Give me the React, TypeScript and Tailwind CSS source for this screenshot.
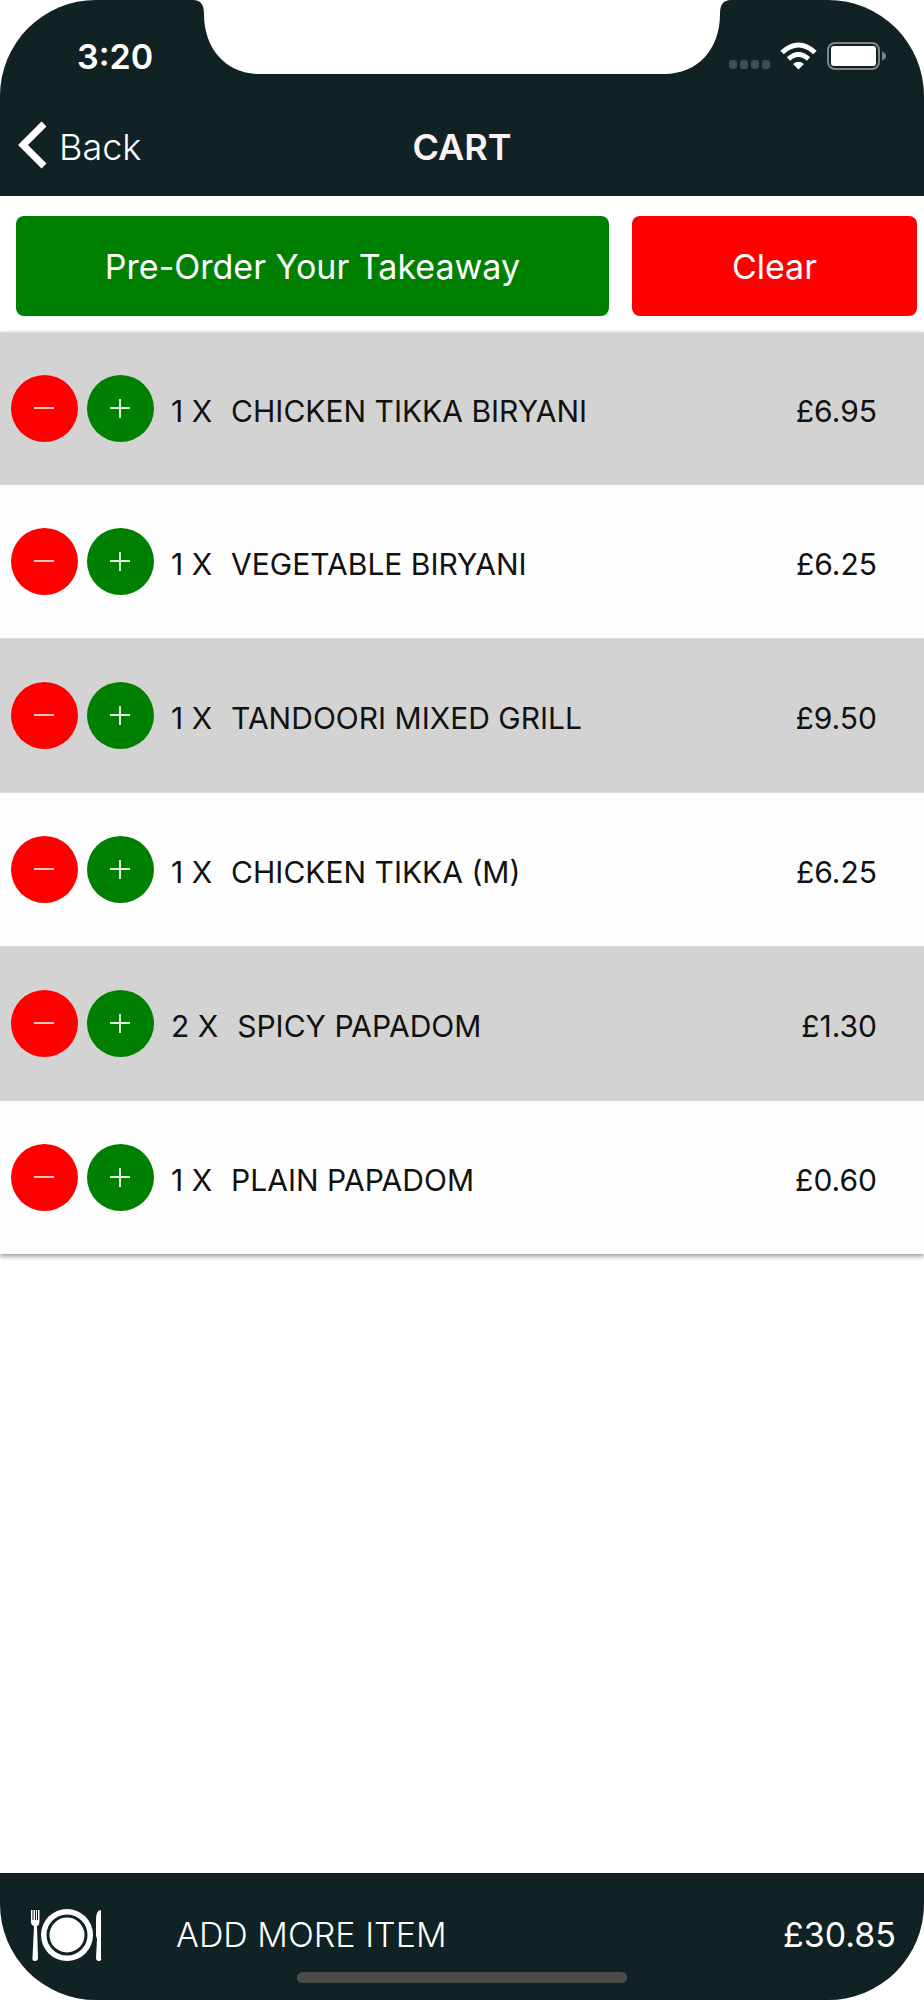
const items = [
  { qty: 1, name: "CHICKEN TIKKA BIRYANI", price: "£6.95" },
  { qty: 1, name: "VEGETABLE BIRYANI", price: "£6.25" },
  { qty: 1, name: "TANDOORI MIXED GRILL", price: "£9.50" },
  { qty: 1, name: "CHICKEN TIKKA (M)", price: "£6.25" },
  { qty: 2, name: "SPICY PAPADOM", price: "£1.30" },
  { qty: 1, name: "PLAIN PAPADOM", price: "£0.60" },
];

const StatusBar = () => {
  return (
    <div className="relative flex justify-between items-center h-28 pl-[77px] pr-[37px]">
      <span className="text-[34px] font-semibold">3:20</span>
      <svg
        className="absolute top-0 left-1/2 -translate-x-1/2"
        width="538"
        height="74"
        viewBox="0 0 538 74"
        fill="#fff"
      >
        <path d="M0 0C8 0 11 5 11 14C11 49 33 74 67 74H471C505 74 527 49 527 14C527 5 530 0 538 0Z" />
      </svg>
      <svg width="158" height="28" viewBox="0 0 158 28">
        <g fill="#414e51">
          <rect x="0" y="18" width="8" height="9" rx="3" />
          <rect x="11" y="18" width="8" height="9" rx="3" />
          <rect x="22" y="18" width="8" height="9" rx="3" />
          <rect x="33" y="18" width="8" height="9" rx="3" />
        </g>
        <g fill="none" stroke="#fff" strokeWidth="5">
          <path d="M53 10.5Q69.5 -4.5 86 10.5" />
          <path d="M59.5 17Q69.5 8 79.5 17" />
        </g>
        <path d="M64 22Q69.5 17.5 75 22L69.5 27.5Z" fill="#fff" />
        <rect x="99" y="1" width="51" height="26" rx="7" fill="none" stroke="#7c8587" strokeWidth="2" />
        <rect x="102" y="4" width="45" height="20" rx="3" fill="#fff" />
        <path d="M153 9.5Q157 11 157 14T153 18.5Z" fill="#7c8587" />
      </svg>
    </div>
  );
};

const Header = () => {
  return (
    <header className="bg-[#112225] text-white">
      <StatusBar />
      <div className="grid grid-cols-[1fr_auto_1fr] items-center h-[84px] pb-3.5">
        <button className="flex items-center gap-3 pl-[18px] text-[36px] font-light">
          <svg
            className="mb-1"
            width="29"
            height="48"
            viewBox="0 0 29 48"
            fill="none"
            stroke="#fff"
            strokeWidth="7"
          >
            <path d="M26 3L5 24L26 45" />
          </svg>
          Back
        </button>
        <h1 className="text-[36px] font-semibold text-[#fbf3f3]">CART</h1>
      </div>
    </header>
  );
};

const Actions = () => {
  return (
    <div className="grid grid-cols-[2.08fr_1fr] gap-[23px] pt-5 pb-4 pl-4 pr-[7px] text-[34px] text-white">
      <button className="h-[100px] rounded-lg bg-[#008000]">
        Pre-Order Your Takeaway
      </button>
      <button className="h-[100px] rounded-lg bg-[#ff0000]">Clear</button>
    </div>
  );
};

const CartList = () => {
  return (
    <ul className="shadow-[0_2px_5px_rgba(0,0,0,0.45)]">
      {items.map((item) => (
        <li
          key={item.name}
          className="flex items-center h-[154px] first:h-[152px] pl-[11px] pr-[47px] text-[30px] text-[#111] bg-[#fdfdfd] odd:bg-[#d3d3d3] border-t border-[#dcdcdc]"
        >
          <button
            aria-label={`Remove one ${item.name}`}
            className="flex items-center justify-center size-[67px] mr-[9px] rounded-full bg-[#ff0000]"
          >
            <svg width="22" height="20" viewBox="0 0 22 20" stroke="#ffc4c4" strokeWidth="2">
              <path d="M0 9H20" />
            </svg>
          </button>
          <button
            aria-label={`Add one ${item.name}`}
            className="flex items-center justify-center size-[67px] mr-[17px] rounded-full bg-[#008000]"
          >
            <svg width="22" height="20" viewBox="0 0 22 20" stroke="#e4f2e4" strokeWidth="2">
              <path d="M0 9H20M10 0V19" />
            </svg>
          </button>
          <span className="mr-[19px] pt-1.5">{item.qty} X</span>
          <span className="flex-1 pt-1.5">{item.name}</span>
          <span className="pt-1.5">{item.price}</span>
        </li>
      ))}
    </ul>
  );
};

const Footer = () => {
  return (
    <footer className="relative flex items-center h-[127px] mt-auto pb-1 pl-[30px] pr-7 text-[34px] text-white bg-[#112225]">
      <svg width="72" height="54" viewBox="0 0 72 54" fill="#fff">
        <path d="M1 2H2.5V12H3.5V2H5V12H6V2H7V12H8V2H9.5V14Q9.5 17 7 18L8 50Q8 53 5 53T2.5 50L4 18Q1 17 1 14Z" />
        <circle cx="37" cy="27" r="26" />
        <circle cx="37" cy="27" r="19" stroke="#112225" strokeWidth="3" />
        <path d="M71 2Q66 2 66 12V28L67 31L66 50Q66 53 69 53T71 50Z" />
      </svg>
      <button className="ml-[74px] font-light">ADD MORE ITEM</button>
      <span className="ml-auto">£30.85</span>
      <div className="absolute bottom-[17px] left-1/2 -translate-x-1/2 w-[330px] h-[11px] rounded-full bg-[#4c4c4c]" />
    </footer>
  );
};

const App = () => {
  return (
    <div className="flex flex-col min-h-screen overflow-hidden rounded-[96px] bg-white font-['Inter','Liberation_Sans',sans-serif]">
      <Header />
      <Actions />
      <CartList />
      <Footer />
    </div>
  );
};

export default App;
